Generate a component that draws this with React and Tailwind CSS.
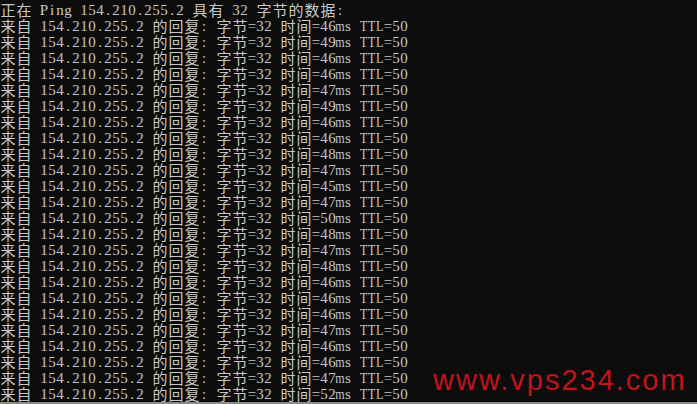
const times = [46, 49, 46, 46, 47, 49, 46, 46, 48, 47, 45, 47, 50, 48, 47, 48, 46, 46, 46, 47, 46, 46, 47, 52]

const lines = [
  "正在 Ping 154.210.255.2 具有 32 字节的数据:",
  ...times.map(t => `来自 154.210.255.2 的回复: 字节=32 时间=${t}ms TTL=50`),
]

// console cells: ascii = 8px, cjk = 16px
const Cell = ({ ch }) => {
  const wide = ch.charCodeAt(0) > 0x2e80
  if (wide) {
    return (
      <span className="inline-block w-[16px] text-center text-[15px] leading-[16px] font-['Noto_Sans_CJK_SC',sans-serif]">
        {ch}
      </span>
    )
  }
  const squeeze = "mMwWTL".includes(ch)
  return (
    <span className="inline-flex w-[8px] justify-center text-[15px] leading-[16px] font-['Liberation_Serif',serif]">
      <span className={squeeze ? "inline-block scale-x-[0.8]" : "inline-block"}>
        {ch === " " ? "\u00a0" : ch}
      </span>
    </span>
  )
}

const App = () => {
  return (
    <div className="w-[697px] h-[404px] bg-[#0c0c0c] flex flex-col overflow-hidden">
      <div className="flex-1 pt-[2px] text-[#c8c8c8] relative">
        {lines.map((line, i) => (
          <div key={i} className="h-[16px] whitespace-nowrap flex">
            {[...line].map((ch, j) => (
              <Cell key={j} ch={ch} />
            ))}
          </div>
        ))}
        <div className="absolute left-[433px] top-[366px] text-[29px] tracking-[2px] text-[#c4121b] font-['Liberation_Sans',Arial,sans-serif] leading-none">
          www.vps234.com
        </div>
      </div>
      <div className="h-[2px] bg-[#8a8a8a]"></div>
    </div>
  )
}

export default App
